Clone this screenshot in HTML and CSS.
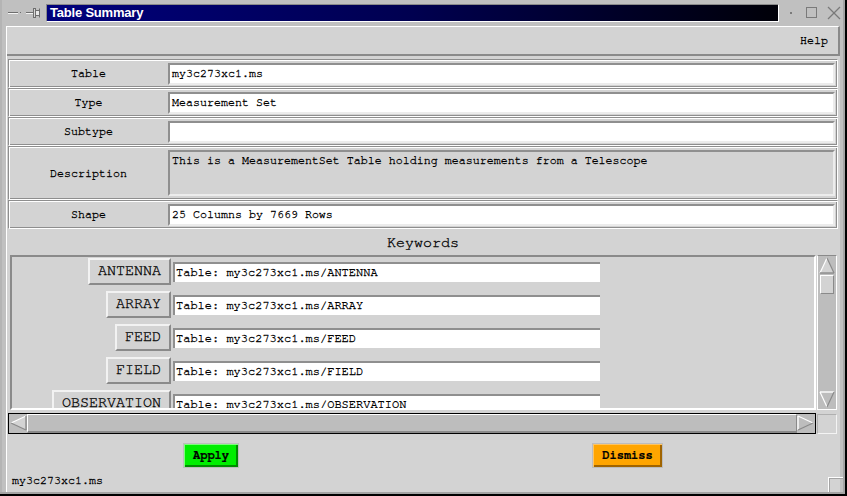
FILE: index.html
```html
<!DOCTYPE html>
<html>
<head>
<meta charset="utf-8">
<title>Table Summary</title>
<link rel="stylesheet" href="styles.css">
</head>
<body>
<div class="window">
  <div class="titlebar">
    <svg class="tb-left" width="46" height="25" viewBox="0 0 46 25">
      <line x1="8" y1="12.5" x2="18" y2="12.5" stroke="#6e6e6e" stroke-width="1"/>
      <line x1="8" y1="13.5" x2="18" y2="13.5" stroke="#f4f4f4" stroke-width="1"/>
      <rect x="20" y="12" width="1" height="1" fill="#6e6e6e"/>
      <line x1="26" y1="12.5" x2="33" y2="12.5" stroke="#6e6e6e" stroke-width="1"/>
      <line x1="26" y1="13.5" x2="33" y2="13.5" stroke="#f4f4f4" stroke-width="1"/>
      <rect x="33.5" y="8.5" width="2" height="9" fill="#d8d8d8" stroke="#6e6e6e" stroke-width="1"/>
      <rect x="35.5" y="10.5" width="4" height="5" fill="#e8e8e8" stroke="#6e6e6e" stroke-width="1"/>
      <line x1="39.5" y1="8.5" x2="39.5" y2="17.5" stroke="#6e6e6e" stroke-width="1"/>
    </svg>
    <div class="tb-title">Table Summary</div>
    <svg class="tb-right" width="66" height="25" viewBox="0 0 66 25">
      <rect x="11" y="12" width="2" height="2" fill="#7a7a7a"/>
      <rect x="27.5" y="7.5" width="10" height="10" fill="none" stroke="#7a7a7a" stroke-width="1"/>
      <line x1="49" y1="7" x2="61" y2="19" stroke="#7a7a7a" stroke-width="1.2"/>
      <line x1="61" y1="7" x2="49" y2="19" stroke="#7a7a7a" stroke-width="1.2"/>
    </svg>
  </div>

  <div class="client">
    <div class="menubar"><span class="menu-item">Help</span></div>

    <div class="rows">
      <div class="row">
        <div class="row-label">Table</div>
        <div class="entry">my3c273xc1.ms</div>
      </div>
      <div class="row">
        <div class="row-label">Type</div>
        <div class="entry">Measurement Set</div>
      </div>
      <div class="row">
        <div class="row-label">Subtype</div>
        <div class="entry"></div>
      </div>
      <div class="row row-tall">
        <div class="row-label">Description</div>
        <div class="entry entry-text">This is a MeasurementSet Table holding measurements from a Telescope</div>
      </div>
      <div class="row">
        <div class="row-label">Shape</div>
        <div class="entry">25 Columns by 7669 Rows</div>
      </div>
    </div>

    <div class="keywords">
      <div class="kw-title">Keywords</div>
      <div class="kw-body">
        <div class="kw-canvas">
          <div class="kw-row">
            <div class="kw-cell"><span class="kw-btn">ANTENNA</span></div>
            <div class="kw-entry">Table: my3c273xc1.ms/ANTENNA</div>
          </div>
          <div class="kw-row">
            <div class="kw-cell"><span class="kw-btn">ARRAY</span></div>
            <div class="kw-entry">Table: my3c273xc1.ms/ARRAY</div>
          </div>
          <div class="kw-row">
            <div class="kw-cell"><span class="kw-btn">FEED</span></div>
            <div class="kw-entry">Table: my3c273xc1.ms/FEED</div>
          </div>
          <div class="kw-row">
            <div class="kw-cell"><span class="kw-btn">FIELD</span></div>
            <div class="kw-entry">Table: my3c273xc1.ms/FIELD</div>
          </div>
          <div class="kw-row">
            <div class="kw-cell"><span class="kw-btn">OBSERVATION</span></div>
            <div class="kw-entry">Table: my3c273xc1.ms/OBSERVATION</div>
          </div>
        </div>
        <div class="vscroll">
          <svg class="arrow" width="16" height="17" viewBox="0 0 16 17">
            <polygon points="8,1 15,16 1,16" fill="#d3d3d3"/>
            <line x1="8" y1="1" x2="1" y2="16" stroke="#ffffff" stroke-width="1.2"/>
            <line x1="8" y1="1" x2="15" y2="16" stroke="#8a8a8a" stroke-width="1.2"/>
            <line x1="1" y1="16" x2="15" y2="16" stroke="#8a8a8a" stroke-width="1.4"/>
          </svg>
          <div class="vslider"></div>
          <div class="vtrough"></div>
          <svg class="arrow" width="16" height="17" viewBox="0 0 16 17">
            <polygon points="1,1 15,1 8,16" fill="#bdbdbd"/>
            <line x1="1" y1="1" x2="15" y2="1" stroke="#ffffff" stroke-width="1.4"/>
            <line x1="1" y1="1" x2="8" y2="16" stroke="#ffffff" stroke-width="1.2"/>
            <line x1="15" y1="1" x2="8" y2="16" stroke="#8a8a8a" stroke-width="1.2"/>
          </svg>
        </div>
        <div class="hscroll">
          <svg class="harrow" width="17" height="17" viewBox="0 0 17 17">
            <polygon points="1,8 16,1 16,15" fill="#d3d3d3"/>
            <line x1="1" y1="8" x2="16" y2="1" stroke="#ffffff" stroke-width="1.2"/>
            <line x1="1" y1="8" x2="16" y2="15" stroke="#8a8a8a" stroke-width="1.2"/>
            <line x1="16" y1="1" x2="16" y2="15" stroke="#8a8a8a" stroke-width="1.4"/>
          </svg>
          <div class="hslider"></div>
          <svg class="harrow" width="17" height="17" viewBox="0 0 17 17">
            <polygon points="1,1 16,8 1,15" fill="#bdbdbd"/>
            <line x1="1" y1="1" x2="1" y2="15" stroke="#ffffff" stroke-width="1.4"/>
            <line x1="1" y1="1" x2="16" y2="8" stroke="#ffffff" stroke-width="1.2"/>
            <line x1="1" y1="15" x2="16" y2="8" stroke="#8a8a8a" stroke-width="1.2"/>
          </svg>
        </div>
        <div class="corner"></div>
      </div>
    </div>

    <div class="actions">
      <div class="action-cell"><span class="btn btn-apply">Apply</span></div>
      <div class="action-cell"><span class="btn btn-dismiss">Dismiss</span></div>
    </div>

    <div class="status">my3c273xc1.ms</div>
  </div>
  <div class="resize-grip"></div>
</div>
</body>
</html>
```

FILE: styles.css
```css
html, body {
  margin: 0;
  padding: 0;
  background: #c0c0c0;
}

body {
  font-family: "Nimbus Mono PS", "FreeMono", "Liberation Mono", "DejaVu Sans Mono", monospace;
  font-size: 11.67px;
  color: #000;
  -webkit-text-stroke: 0.3px #000;
}

.window {
  position: relative;
  width: 847px;
  height: 496px;
  box-sizing: border-box;
  background: #c0c0c0;
  border-right: 2px solid #000;
  border-bottom: 2px solid #000;
  box-shadow: inset -2px -2px 0 #a4a4a4, inset 2px 0 0 #b4b4b4;
  display: flex;
  flex-direction: column;
  overflow: hidden;
}

/* ---------- title bar ---------- */
.titlebar {
  height: 25px;
  display: flex;
  align-items: flex-start;
  flex: none;
}

.tb-left, .tb-right {
  display: block;
  flex: none;
}

.tb-title {
  margin-top: 4px;
  width: 733px;
  height: 18px;
  box-sizing: border-box;
  border-right: 1px solid #fff;
  border-bottom: 1px solid #fff;
  border-top: 1px solid #8a8a8a;
  border-left: 1px solid #8a8a8a;
  background: linear-gradient(90deg, #00007c 0%, #000050 50%, #000008 100%);
  color: #fff;
  -webkit-text-stroke: 0;
  font-family: "Liberation Sans", Arial, sans-serif;
  font-weight: bold;
  font-size: 13px;
  letter-spacing: -0.2px;
  line-height: 16px;
  padding-left: 3px;
  white-space: nowrap;
}

/* ---------- client ---------- */
.client {
  margin-left: 6px;
  margin-top: 1px;
  width: 834px;
  height: 466px;
  box-sizing: border-box;
  border-left: 1px solid #fff;
  background: #d3d3d3;
  display: flex;
  flex-direction: column;
  flex: none;
}

.menubar {
  height: 30px;
  box-sizing: border-box;
  border-top: 1px solid #fff;
  border-right: 2px solid #8a8a8a;
  border-bottom: 2px solid #8a8a8a;
  display: flex;
  justify-content: flex-end;
  align-items: center;
  padding-right: 10px;
  flex: none;
}

.menu-item {
  line-height: 14px;
}

/* ---------- info rows ---------- */
.rows {
  padding: 3px 2px 0 1px;
  display: flex;
  flex-direction: column;
  flex: none;
}

.row {
  height: 29px;
  box-sizing: border-box;
  display: flex;
  align-items: center;
  border: 1px solid;
  border-color: #8e8e8e #fff #fff #8e8e8e;
  box-shadow: inset 1px 1px 0 #fff, inset -1px -1px 0 #8e8e8e;
}

.row-tall {
  height: 54px;
}

.row-label {
  width: 159px;
  flex: none;
  text-align: center;
  line-height: 14px;
  padding-top: 1px;
}

.entry {
  flex: 1;
  margin-right: 2px;
  height: 22px;
  box-sizing: border-box;
  border: 2px solid;
  border-color: #8f8f8f #ececec #ececec #8f8f8f;
  background: #fff;
  padding: 0 2px;
  line-height: 18px;
  white-space: nowrap;
  overflow: hidden;
}

.entry-text {
  height: 46px;
  background: #d3d3d3;
  line-height: 14px;
  padding-top: 2px;
}

/* ---------- keywords ---------- */
.keywords {
  margin: 0 2px 0 1px;
  flex: none;
}

.kw-title {
  height: 26px;
  line-height: 27px;
  text-align: center;
  font-size: 15px;
}

.kw-body {
  display: grid;
  grid-template-columns: 808px 1px 20px;
  grid-template-rows: 155px 3px 21px;
}

.kw-canvas {
  grid-column: 1;
  grid-row: 1;
  margin-left: 2px;
  box-sizing: border-box;
  border: 2px solid;
  border-color: #8a8a8a #fff #fff #8a8a8a;
  padding-top: 1px;
  overflow: hidden;
}

.kw-row {
  display: flex;
  align-items: center;
  height: 27px;
  margin-bottom: 6px;
}

.kw-cell {
  width: 159px;
  flex: none;
  display: flex;
  justify-content: flex-end;
}

.kw-btn {
  display: block;
  height: 27px;
  box-sizing: border-box;
  border: 2px solid;
  border-color: #f2f2f2 #8a8a8a #8a8a8a #f2f2f2;
  padding: 0 8px;
  font-size: 15px;
  line-height: 22px;
  background: #d3d3d3;
  white-space: nowrap;
}

.kw-entry {
  margin-left: 2px;
  width: 427px;
  height: 20px;
  box-sizing: border-box;
  border-top: 2px solid #8f8f8f;
  border-left: 2px solid #8f8f8f;
  background: #fff;
  padding-left: 1px;
  font-size: 12px;
  line-height: 16px;
  white-space: nowrap;
  overflow: hidden;
}

.vscroll {
  grid-column: 3;
  grid-row: 1;
  box-sizing: border-box;
  border: 1px solid;
  border-color: #8a8a8a #fff #fff #fff;
  background: #bdbdbd;
  display: flex;
  flex-direction: column;
  align-items: center;
  padding: 1px 0;
}

.arrow {
  display: block;
  flex: none;
}

.vslider {
  margin-top: 1px;
  width: 14px;
  height: 19px;
  box-sizing: border-box;
  border: 1px solid;
  border-color: #fff #8a8a8a #8a8a8a #fff;
  background: #d3d3d3;
  flex: none;
}

.vtrough {
  flex: 1;
}

.hscroll {
  grid-column: 1;
  grid-row: 3;
  box-sizing: border-box;
  border: 1px solid #000;
  background: #bdbdbd;
  display: flex;
  align-items: center;
  padding: 0 1px;
}

.harrow {
  display: block;
  flex: none;
}

.hslider {
  flex: 1;
  height: 19px;
  box-sizing: border-box;
  border-top: 1px solid #fff;
  border-left: 1px solid #fff;
  border-bottom: 2px solid #8a8a8a;
  border-right: 1px solid #8a8a8a;
  background: #bdbdbd;
}

.corner {
  grid-column: 3;
  grid-row: 3;
  box-sizing: border-box;
  border: 1px solid;
  border-color: #b0b0b0 #f4f4f4 #f4f4f4 #b0b0b0;
  background: #d3d3d3;
  margin-top: 1px;
}

/* ---------- actions ---------- */
.actions {
  margin-top: 9px;
  display: grid;
  grid-template-columns: 408px 1fr;
  flex: none;
}

.action-cell {
  display: flex;
  justify-content: center;
}

.btn {
  display: block;
  height: 25px;
  box-sizing: border-box;
  border: 1px solid #bcbcbc;
  padding: 0 9px;
  font-weight: bold;
  font-size: 12px;
  line-height: 22px;
  white-space: nowrap;
  -webkit-text-stroke: 0.2px #000;
}

.btn-apply {
  background: #00ee00;
  box-shadow: inset 1px 1px 0 #7cff7c, inset -2px -2px 0 #008b00;
}

.btn-dismiss {
  background: #ffa500;
  box-shadow: inset 1px 1px 0 #ffc460, inset -2px -2px 0 #a06400;
}

/* ---------- status ---------- */
.status {
  margin-top: 6px;
  padding-left: 5px;
  line-height: 14px;
  flex: none;
}

.resize-grip {
  position: absolute;
  left: 828px;
  top: 477px;
  width: 15px;
  height: 15px;
  box-sizing: border-box;
  border-top: 1px solid #fff;
  border-left: 1px solid #fff;
  box-shadow: inset 1px 1px 0 #a4a4a4;
}
```
